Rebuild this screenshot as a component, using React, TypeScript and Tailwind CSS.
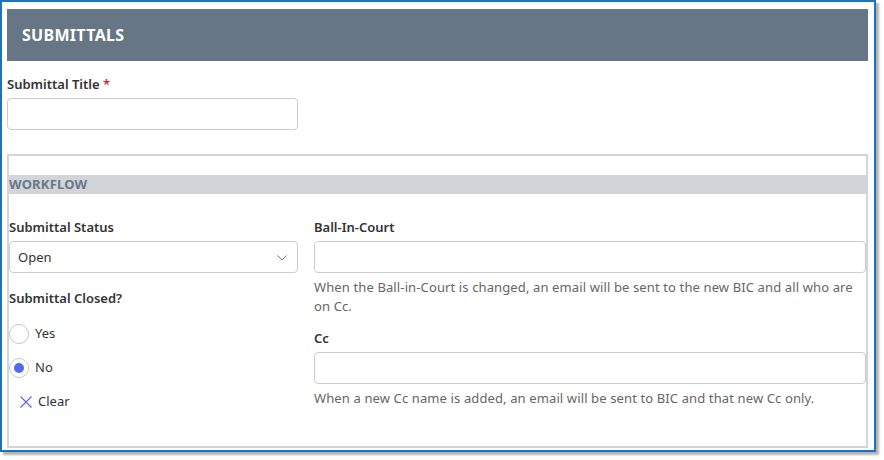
import { useState } from "react";

const font = { fontFamily: '"Noto Sans", "Open Sans", sans-serif' };

function Radio({ label, checked, onClick }: { label: string; checked: boolean; onClick: () => void }) {
  return (
    <button type="button" onClick={onClick} className="flex h-[34px] items-center gap-[6px] text-[13px] text-[#333]">
      <span className="flex h-[20px] w-[20px] items-center justify-center rounded-full border border-[#c8c8c8] bg-white">
        {checked && <span className="h-[10px] w-[10px] rounded-full bg-[#4f6bed]" />}
      </span>
      <span>{label}</span>
    </button>
  );
}

export default function App() {
  const [closed, setClosed] = useState<"yes" | "no" | null>("no");

  return (
    <div className="h-[460px] w-[884px] bg-white" style={font}>
      <div className="h-[452px] w-[876px] border-2 border-[#1a74ba] bg-white pl-[5px] pr-[6px] pt-[7px] shadow-[3px_3px_2px_rgba(0,0,0,0.3)]">
        <div className="flex h-[52px] items-center bg-[#677685] pl-[15px]">
          <h1 className="text-[16px] font-bold tracking-[0.3px] text-white">SUBMITTALS</h1>
        </div>

        <div className="mt-[15px] text-[13px] font-semibold leading-[16px] text-[#333]">
          Submittal Title <span className="text-[#c4262e]">*</span>
        </div>
        <input className="mt-[6px] block h-[32px] w-[291px] rounded border border-[#ccc] outline-none" />

        <div className="mt-[24px] h-[294px] border-2 border-[#d2d5da] pt-[19px]">
          <div className="flex h-[19px] items-center bg-[#d1d4d9] text-[13px] font-bold tracking-[0.2px] text-[#6b7785]">
            WORKFLOW
          </div>

          <div className="mt-[25px] flex gap-[16px]">
            <div className="w-[289px]">
              <div className="text-[13px] font-semibold leading-[16px] text-[#333]">Submittal Status</div>
              <div className="mt-[6px] flex h-[32px] items-center justify-between rounded border border-[#ccc] pl-[8px] pr-[10px] pt-[1px] text-[13px] text-[#333]">
                <span>Open</span>
                <svg width="10" height="6" viewBox="0 0 10 6" fill="none" stroke="#777" strokeWidth="1">
                  <path d="M0.5 0.5 L5 5 L9.5 0.5" />
                </svg>
              </div>
              <div className="mt-[17px] text-[13px] font-semibold leading-[16px] text-[#333]">Submittal Closed?</div>
              <div className="mt-[11px] flex flex-col items-start">
                <Radio label="Yes" checked={closed === "yes"} onClick={() => setClosed("yes")} />
                <Radio label="No" checked={closed === "no"} onClick={() => setClosed("no")} />
                <button
                  type="button"
                  onClick={() => setClosed(null)}
                  className="flex h-[34px] items-center gap-[6px] pl-[11px] text-[13px] text-[#333]"
                >
                  <svg width="12" height="12" viewBox="0 0 12 12" stroke="#5b5fe0" strokeWidth="1.1">
                    <path d="M0.5 0.5 L11.5 11.5 M11.5 0.5 L0.5 11.5" />
                  </svg>
                  Clear
                </button>
              </div>
            </div>

            <div className="flex-1">
              <div className="text-[13px] font-semibold leading-[16px] text-[#333]">Ball-In-Court</div>
              <input className="mt-[6px] block h-[32px] w-full rounded border border-[#ccc] outline-none" />
              <p className="mt-[5px] text-[13px] leading-[19px] tracking-[0.12px] text-[#666]">
                When the Ball-in-Court is changed, an email will be sent to the new BIC and all who are on Cc.
              </p>
              <div className="mt-[14px] text-[13px] font-semibold leading-[16px] text-[#333]">Cc</div>
              <input className="mt-[6px] block h-[32px] w-full rounded border border-[#ccc] outline-none" />
              <p className="mt-[5px] text-[13px] leading-[19px] tracking-[0.12px] text-[#666]">
                When a new Cc name is added, an email will be sent to BIC and that new Cc only.
              </p>
            </div>
          </div>
        </div>
      </div>
    </div>
  );
}
